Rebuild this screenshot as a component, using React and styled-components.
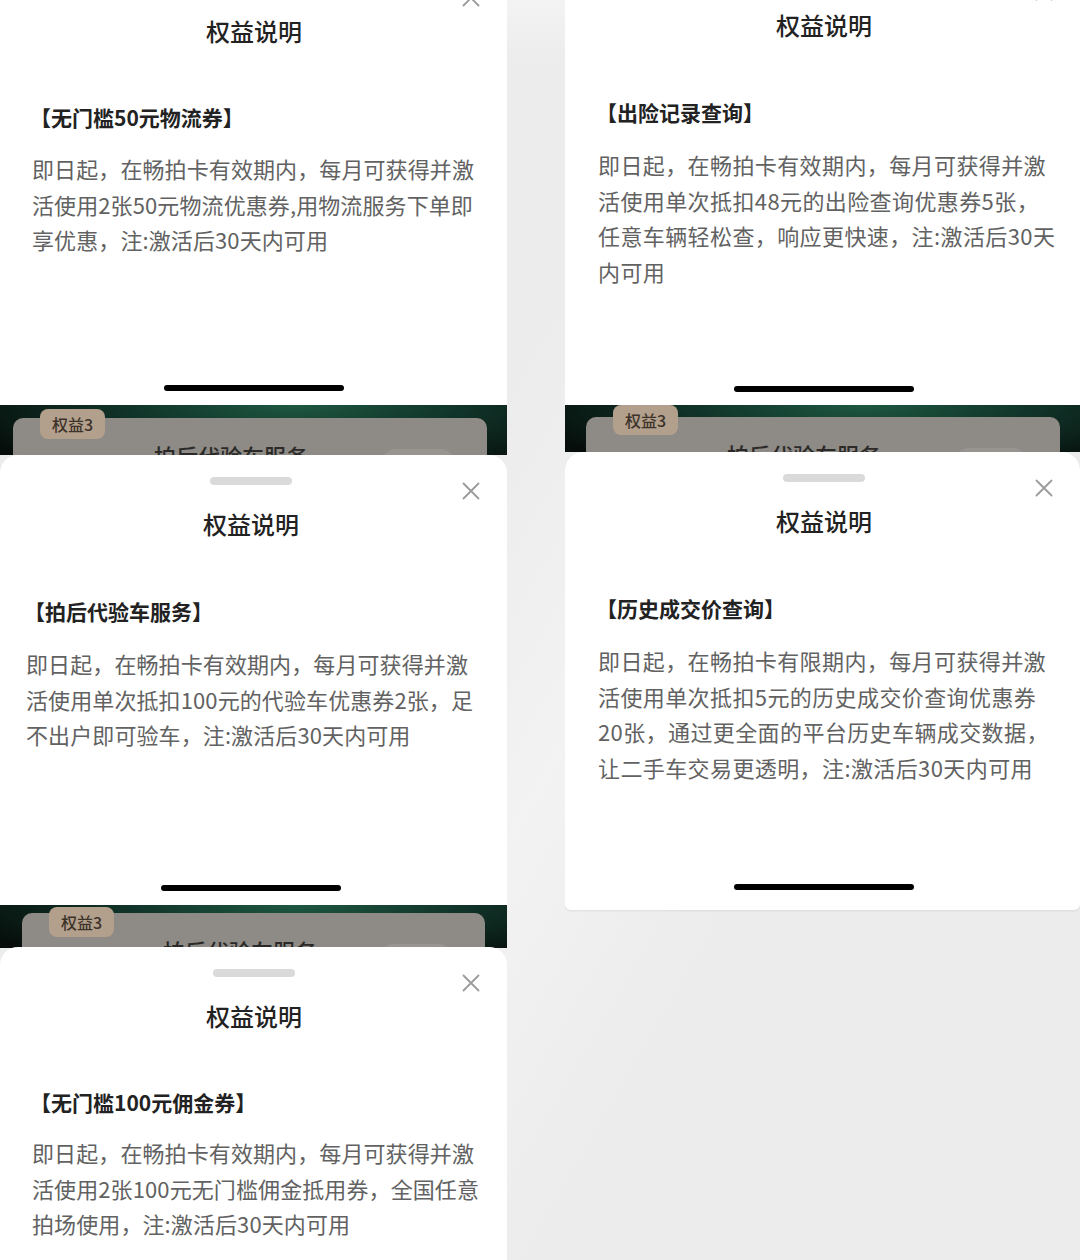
import React from "react";
import styled, { createGlobalStyle } from "styled-components";

const GlobalStyle = createGlobalStyle`
  html, body { margin: 0; padding: 0; }
  body {
    background: #ededed;
    font-family: "Noto Sans CJK SC", "Noto Sans", sans-serif;
  }
  #root { width: 1080px; height: 1260px; overflow: hidden; }
`;

const Page = styled.main`
  display: grid;
  grid-template-columns: 507px 515px;
  column-gap: 58px;
  width: 1080px;
  height: 1260px;
  overflow: hidden;
  background:
    linear-gradient(120deg, rgba(255,255,255,0) 40%, rgba(255,255,255,0.35) 55%, rgba(255,255,255,0) 70%),
    linear-gradient(180deg, #f3f3f3 0px, #ececec 60px, #ececec 100%);
`;

const Column = styled.div`
  display: flex;
  flex-direction: column;
  min-width: 0;
  overflow: hidden;
`;

const Sheet = styled.section`
  position: relative;
  flex: none;
  box-sizing: border-box;
  height: ${(p) => p.$h}px;
  margin-top: ${(p) => p.$offset || 0}px;
  padding: 22px ${(p) => p.$pr}px 0 ${(p) => p.$pl}px;
  display: flex;
  flex-direction: column;
  background: #fff;
  border-radius: 18px 18px ${(p) => p.$br || 0}px ${(p) => p.$br || 0}px;
  box-shadow: ${(p) => (p.$br ? "0 1px 3px rgba(0,0,0,0.08)" : "none")};
`;

const Handle = styled.div`
  flex: none;
  align-self: center;
  width: 82px;
  height: 8px;
  border-radius: 4px;
  background: #dadada;
`;

const Close = styled.button`
  position: absolute;
  top: 27px;
  right: 27px;
  width: 18px;
  height: 18px;
  padding: 0;
  border: 0;
  background: none;
  display: block;
`;

const Title = styled.h2`
  margin: 22px 0 0;
  text-align: center;
  font-size: 24px;
  line-height: 34px;
  font-weight: 500;
  color: #222;
`;

const Section = styled.h3`
  margin: ${(p) => p.$gap}px 0 0 ${(p) => p.$indent}px;
  font-size: 21px;
  line-height: 30px;
  font-weight: 600;
  color: #222;
  white-space: nowrap;
`;

const Body = styled.p`
  margin: ${(p) => p.$gap}px 0 0;
  font-size: 22px;
  line-height: 35.5px;
  color: #626262;
  letter-spacing: ${(p) => p.$ls}px;
  white-space: nowrap;
`;

const Line = styled.span`
  display: block;
`;

const HomeBar = styled.div`
  flex: none;
  align-self: center;
  margin-top: auto;
  margin-bottom: ${(p) => p.$gap}px;
  width: 180px;
  height: 6px;
  border-radius: 3px;
  background: #000;
`;

const Peek = styled.div`
  flex: none;
  box-sizing: border-box;
  height: ${(p) => p.$h}px;
  overflow: hidden;
  padding: ${(p) => p.$top}px ${(p) => p.$right}px 0 ${(p) => p.$left}px;
  background: radial-gradient(ellipse 70% 150% at 58% 0%, #1e5841 0%, #11352a 45%, #060d0b 100%);
`;

const Card = styled.div`
  position: relative;
  height: 90px;
  border-radius: 10px;
  background: #8e8a86;
`;

const Badge = styled.span`
  position: absolute;
  left: 27px;
  top: ${(p) => p.$top}px;
  height: 30px;
  padding: 0 12px;
  border-radius: 8px;
  background: #b3a08c;
  color: #3d332a;
  font-size: 16px;
  line-height: 30px;
  font-weight: 500;
`;

const CardRow = styled.div`
  display: flex;
  align-items: flex-start;
  padding: 22px 32px 0 141px;
`;

const CardName = styled.span`
  font-size: 22px;
  line-height: 30px;
  font-weight: 500;
  color: #2b2a29;
`;

const CardButton = styled.span`
  margin-left: auto;
  margin-top: 9px;
  width: 74px;
  height: 30px;
  border-radius: 15px;
  background: #989490;
`;

const CloseIcon = () => (
  <svg width="18" height="18" viewBox="0 0 18 18" fill="none">
    <path d="M1.5 1.5L16.5 16.5M16.5 1.5L1.5 16.5" stroke="#9b9b9b" strokeWidth="1.8" strokeLinecap="round" />
  </svg>
);

const Strip = ({ h, top, left, right, badgeTop }) => (
  <Peek $h={h} $top={top} $left={left} $right={right}>
    <Card>
      <Badge $top={badgeTop}>权益3</Badge>
      <CardRow>
        <CardName>拍后代验车服务</CardName>
        <CardButton />
      </CardRow>
    </Card>
  </Peek>
);

const Panel = ({ data }) => (
  <Sheet $h={data.h} $offset={data.offset} $pl={data.pl} $pr={data.pr} $br={data.br}>
    <Handle />
    <Close aria-label="关闭">
      <CloseIcon />
    </Close>
    <Title>权益说明</Title>
    <Section $indent={data.indent} $gap={data.sg}>{data.heading}</Section>
    <Body $ls={data.ls} $gap={data.bg}>
      {data.lines.map((l, i) => (
        <Line key={i}>{l}</Line>
      ))}
    </Body>
    {data.bar != null && <HomeBar $gap={data.bar} />}
  </Sheet>
);

const panels = {
  a: {
    h: 443, offset: -38, pl: 32, pr: 31, indent: -2, ls: 0.1, bar: 14, sg: 54, bg: 19,
    heading: "【无门槛50元物流券】",
    lines: [
      "即日起，在畅拍卡有效期内，每月可获得并激",
      "活使用2张50元物流优惠券,用物流服务下单即",
      "享优惠，注:激活后30天内可用",
    ],
  },
  b: {
    h: 450, pl: 26, pr: 31, indent: -2, ls: 0.1, bar: 14, sg: 55, bg: 20,
    heading: "【拍后代验车服务】",
    lines: [
      "即日起，在畅拍卡有效期内，每月可获得并激",
      "活使用单次抵扣100元的代验车优惠券2张，足",
      "不出户即可验车，注:激活后30天内可用",
    ],
  },
  c: {
    h: 340, offset: -1, pl: 32, pr: 31, indent: -2, ls: 0.1, bar: null, sg: 54, bg: 18,
    heading: "【无门槛100元佣金券】",
    lines: [
      "即日起，在畅拍卡有效期内，每月可获得并激",
      "活使用2张100元无门槛佣金抵用券，全国任意",
      "拍场使用，注:激活后30天内可用",
    ],
  },
  d: {
    h: 449, offset: -44, pl: 33, pr: 30, indent: -2, ls: 0.4, bar: 13, sg: 55, bg: 20,
    heading: "【出险记录查询】",
    lines: [
      "即日起，在畅拍卡有效期内，每月可获得并激",
      "活使用单次抵扣48元的出险查询优惠券5张，",
      "任意车辆轻松查，响应更快速，注:激活后30天",
      "内可用",
    ],
  },
  e: {
    h: 458, offset: 0, pl: 33, pr: 30, indent: -2, ls: 0.4, bar: 20, br: 6, sg: 55, bg: 20,
    heading: "【历史成交价查询】",
    lines: [
      "即日起，在畅拍卡有限期内，每月可获得并激",
      "活使用单次抵扣5元的历史成交价查询优惠券",
      "20张，通过更全面的平台历史车辆成交数据，",
      "让二手车交易更透明，注:激活后30天内可用",
    ],
  },
};

export default function App() {
  return (
    <>
      <GlobalStyle />
      <Page>
        <Column>
          <Panel data={panels.a} />
          <Strip h={50} top={13} left={13} right={20} badgeTop={-9} />
          <Panel data={panels.b} />
          <Strip h={43} top={8} left={22} right={22} badgeTop={-6} />
          <Panel data={panels.c} />
        </Column>
        <Column>
          <Panel data={panels.d} />
          <Strip h={47} top={12} left={21} right={20} badgeTop={-12} />
          <Panel data={panels.e} />
        </Column>
      </Page>
    </>
  );
}
